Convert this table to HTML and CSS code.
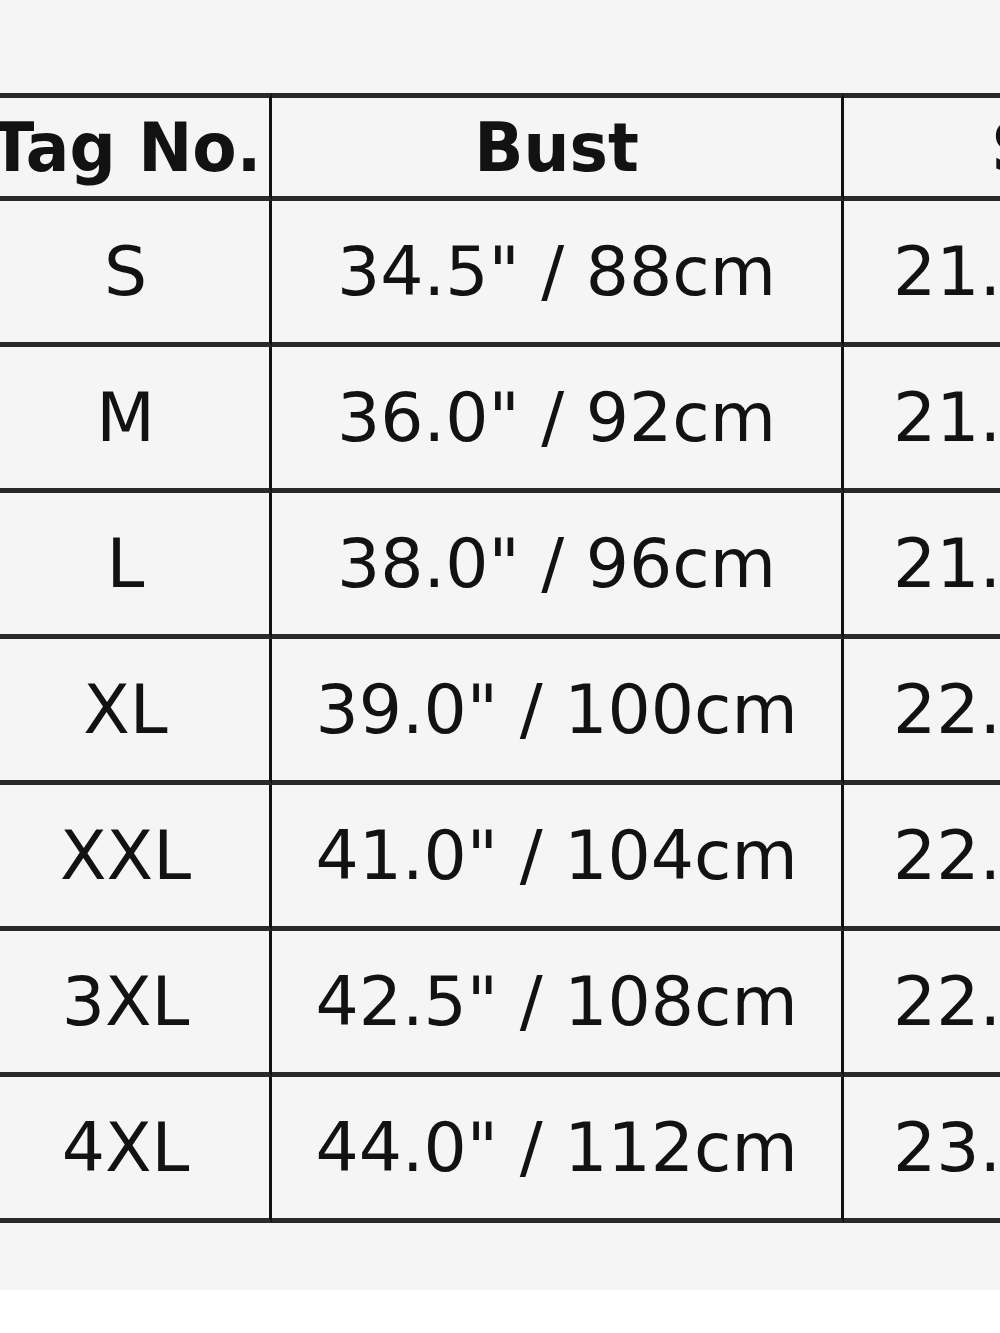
FILE: index.html
```html
<!DOCTYPE html>
<html>
<head>
<meta charset="utf-8">
<link rel="stylesheet" href="styles.css">
</head>
<body>
<div class="sheet">
  <table class="chart">
    <colgroup>
      <col class="c1"><col class="c2"><col class="c3">
    </colgroup>
    <thead>
      <tr><th><span>Tag No.</span></th><th><span>Bust</span></th><th><span>Sleeve</span></th></tr>
    </thead>
    <tbody>
      <tr><td><span>S</span></td><td><span>34.5" / 88cm</span></td><td><span>21.0" / 53cm</span></td></tr>
      <tr><td><span>M</span></td><td><span>36.0" / 92cm</span></td><td><span>21.0" / 53cm</span></td></tr>
      <tr><td><span>L</span></td><td><span>38.0" / 96cm</span></td><td><span>21.0" / 54cm</span></td></tr>
      <tr><td><span>XL</span></td><td><span>39.0" / 100cm</span></td><td><span>22.0" / 55cm</span></td></tr>
      <tr><td><span>XXL</span></td><td><span>41.0" / 104cm</span></td><td><span>22.0" / 56cm</span></td></tr>
      <tr><td><span>3XL</span></td><td><span>42.5" / 108cm</span></td><td><span>22.5" / 57cm</span></td></tr>
      <tr><td><span>4XL</span></td><td><span>44.0" / 112cm</span></td><td><span>23.0" / 58cm</span></td></tr>
    </tbody>
  </table>
</div>
</body>
</html>
```
FILE: styles.css
```css
html, body {
  margin: 0;
  padding: 0;
  background: #ffffff;
  overflow: hidden;
}
.sheet {
  background: #f5f5f5;
  height: 1290px;
  padding-top: 93px;
  box-sizing: border-box;
  overflow: hidden;
}
.chart {
  margin-left: -18px;
  border-collapse: separate;
  border-spacing: 0;
  table-layout: fixed;
  width: 1402px;
  font-family: "DejaVu Sans", Verdana, sans-serif;
  font-size: 68px;
  color: #121212;
}
.c1 { width: 290px; }
.c2 { width: 572px; }
.c3 { width: 540px; }
.chart th,
.chart td {
  box-sizing: border-box;
  padding: 0;
  text-align: center;
  vertical-align: middle;
  white-space: nowrap;
  border-bottom: 5px solid #2a2a2a;
  border-right: 3px solid #111111;
}
.chart th span,
.chart td span {
  display: inline-block;
  transform-origin: center;
}
.chart th {
  height: 108px;
  border-top: 5px solid #2a2a2a;
  font-weight: bold;
}
.chart th span {
  transform: scaleX(0.95);
}
.chart td {
  height: 146px;
  font-weight: normal;
}
```
